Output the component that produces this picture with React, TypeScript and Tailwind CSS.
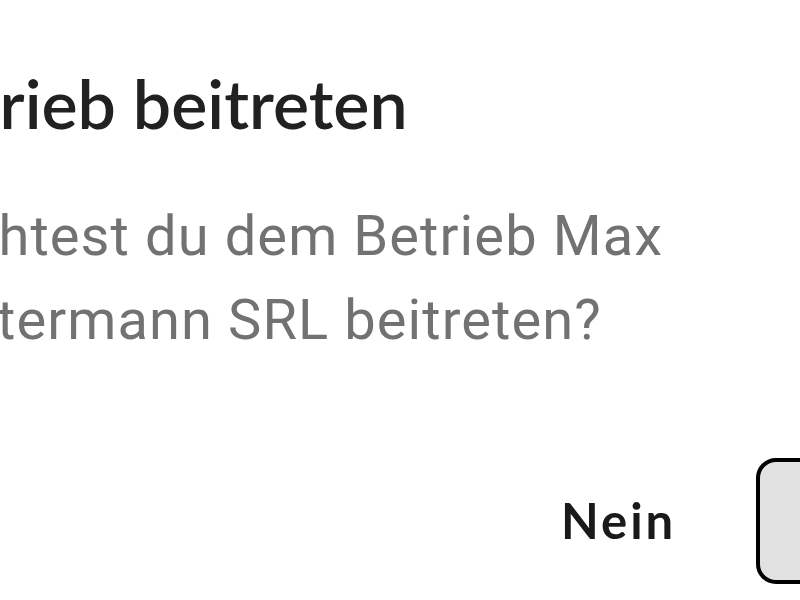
export default function App() {
  return (
    <div className="w-[800px] h-[600px] overflow-hidden bg-white">
      <div className="ml-[-112px] w-[1060px] flex flex-col">
        <h1
          className="ml-[7px] pt-[60px] text-[68px] leading-[86px] font-semibold text-[#212121] whitespace-nowrap"
          style={{ fontFamily: 'Lato, "Open Sans", sans-serif' }}
        >
          Betrieb beitreten
        </h1>
        <p
          className="ml-[-3px] mt-[48px] text-[56px] leading-[84px] tracking-[1.1px] text-[#727272] whitespace-nowrap"
          style={{ fontFamily: 'Roboto, "Noto Sans", sans-serif' }}
        >
          Möchtest du dem Betrieb Max
          <br />
          Mustermann SRL beitreten?
        </p>
        <div className="mt-[96px] flex items-center">
          <button
            className="ml-[673px] text-[49px] font-bold text-[#1a1a1a] tracking-[3px]"
            style={{ fontFamily: 'Lato, "Open Sans", sans-serif' }}
          >
            Nein
          </button>
          <button className="ml-[80px] w-[160px] h-[126px] rounded-[20px] border-4 border-black bg-[#e2e2e2] text-[48px] font-bold">
            Ja
          </button>
        </div>
      </div>
    </div>
  );
}
